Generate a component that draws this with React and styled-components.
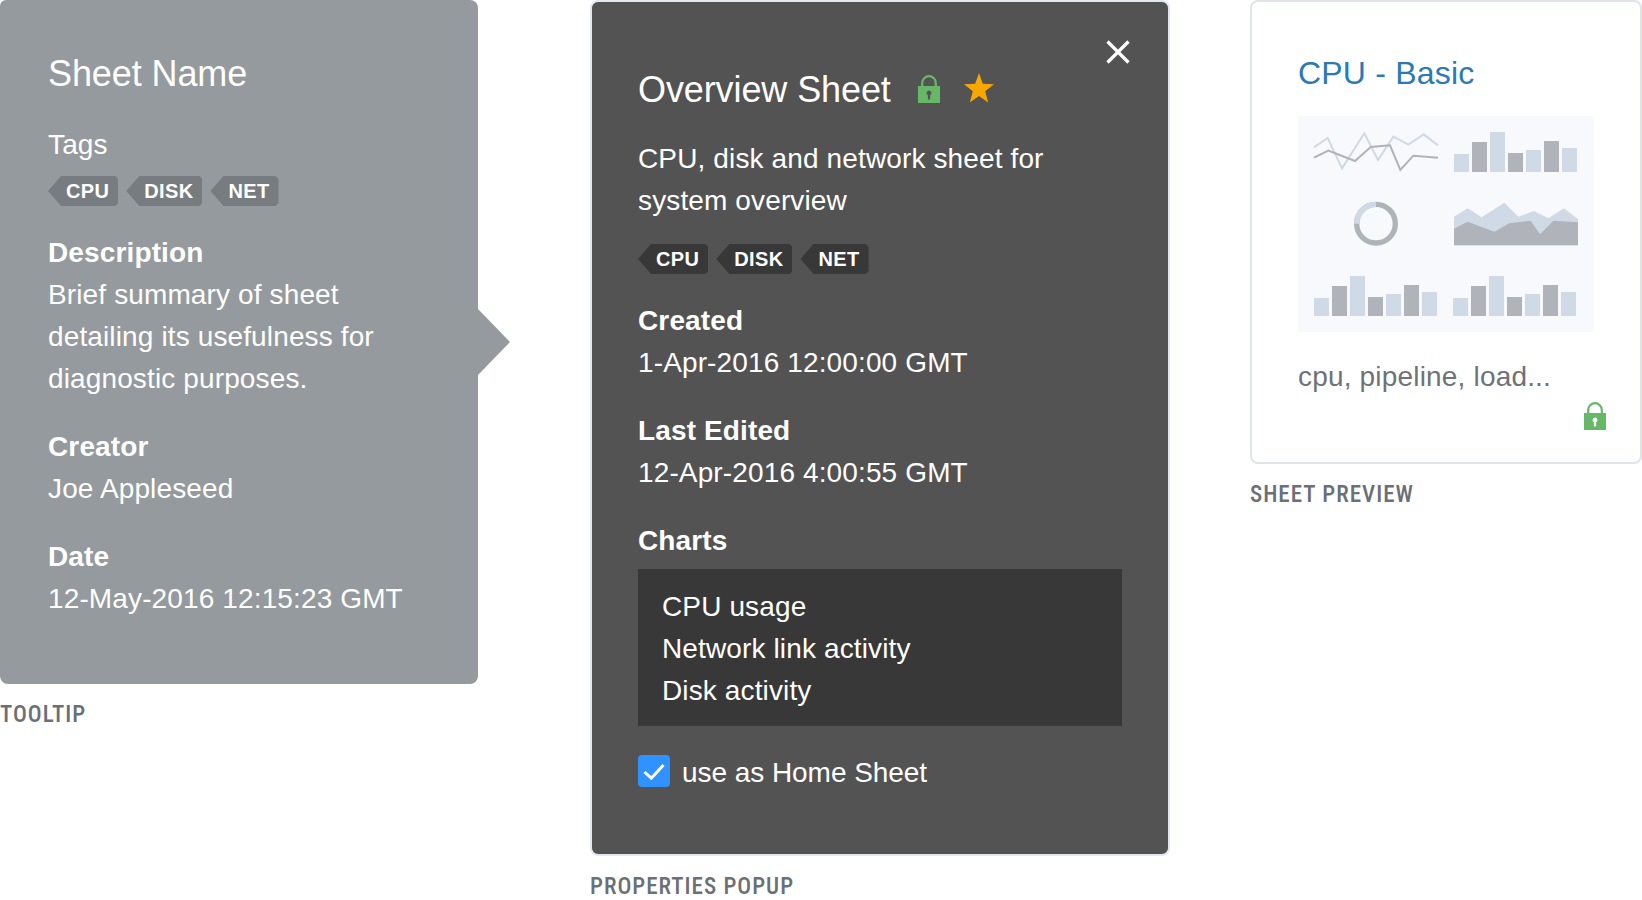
import React from 'react';
import styled, { createGlobalStyle } from 'styled-components';

const Global = createGlobalStyle`
  html, body { margin: 0; padding: 0; background: #fff; }
  body { font-family: "Liberation Sans", Arial, sans-serif; font-size: 28px; line-height: 42px; letter-spacing: 0.13px; }
`;
const Page = styled.div`
  display: flex;
  align-items: flex-start;
  width: 1642px;
  height: 900px;
  overflow: hidden;
`;
const TooltipColumn = styled.section`width: 478px; flex: none;`;
const PopupColumn = styled.section`width: 580px; flex: none; margin-left: 112px;`;
const PreviewColumn = styled.section`width: 392px; flex: none; margin-left: 80px;`;

const Caption = styled.div`
  font-family: Roboto, sans-serif;
  font-weight: 500;
  font-size: 23px;
  line-height: 30px;
  color: #6b6f76;
  margin-top: ${p => p.$top}px;
  font-stretch: 75%;
  letter-spacing: 1px;
  white-space: nowrap;
`;

const Tooltip = styled.div`
  position: relative;
  height: 684px;
  box-sizing: border-box;
  padding: 53px 0 0 48px;
  background: #959a9e;
  border-radius: 6px 8px 8px 8px;
  color: #fff;
  &::after {
    content: '';
    position: absolute;
    left: 100%;
    top: 309px;
    border-style: solid;
    border-width: 33px 0 33px 32px;
    border-color: transparent transparent transparent #959a9e;
  }
`;
const Title = styled.h2`
  margin: 0;
  font-size: 36px;
  line-height: 42px;
  font-weight: 400;
  letter-spacing: -0.1px;
  display: flex;
  align-items: center;
`;
const Label = styled.div`
  font-weight: ${p => (p.$plain ? 400 : 700)};
  margin-top: ${p => p.$top}px;
`;
const Value = styled.div``;
const TagRow = styled.div`
  display: flex;
  gap: 8px;
  margin-top: ${p => p.$top}px;
`;
const Tag = styled.span`
  height: 30px;
  padding: 0 9px 0 18px;
  font-size: 20px;
  font-weight: 700;
  line-height: 31px;
  letter-spacing: 0.35px;
  color: #fff;
  background: ${p => p.$bg};
  clip-path: polygon(13px 0, calc(100% - 3px) 0, 100% 3px, 100% calc(100% - 3px), calc(100% - 3px) 100%, 13px 100%, 0 50%);
`;

const Popup = styled.div`
  position: relative;
  height: 856px;
  box-sizing: border-box;
  padding: 67px 46px 0;
  background: #535353;
  border: 2px solid #e3e7ef;
  border-radius: 8px;
  color: #fff;
`;
const Close = styled.svg`
  position: absolute;
  top: 38px;
  right: 38px;
  width: 24px;
  height: 24px;
`;
const TitleLock = styled.svg`
  width: 22px;
  height: 28px;
  margin: -3px 0 0 27px;
  flex: none;
`;
const Star = styled.svg`
  width: 30px;
  height: 30px;
  margin-left: 24px;
  margin-top: -5px;
  flex: none;
`;
const Summary = styled.p`margin: 27px 0 0;`;
const ChartList = styled.ul`
  list-style: none;
  margin: 7px 0 0;
  padding: 17px 24px 14px;
  background: #383838;
`;
const CheckRow = styled.label`
  display: flex;
  align-items: center;
  gap: 12px;
  height: 32px;
  margin-top: 29px;
`;
const CheckBox = styled.span`
  width: 32px;
  height: 32px;
  flex: none;
  display: flex;
  align-items: center;
  justify-content: center;
  background: #2f92ff;
  border-radius: 4px;
`;
const CheckText = styled.span`
  margin-top: 3px;
  letter-spacing: -0.05px;
`;

const Card = styled.div`
  height: 464px;
  box-sizing: border-box;
  display: flex;
  flex-direction: column;
  padding: 50px 46px 0;
  background: #fff;
  border: 2px solid #dfe4e9;
  border-radius: 8px;
`;
const CardTitle = styled.h3`
  margin: 0;
  font-size: 32px;
  line-height: 42px;
  font-weight: 400;
  letter-spacing: 0.2px;
  color: #2a7ab5;
`;
const Art = styled.svg`
  display: block;
  width: 296px;
  height: 216px;
  margin-top: 22px;
  flex: none;
`;
const CardText = styled.div`
  margin-top: 24px;
  letter-spacing: 0.18px;
  color: #6f7277;
`;
const CardLock = styled.svg`
  width: 22px;
  height: 28px;
  align-self: flex-end;
  margin: 4px -12px 0 0;
`;

const LockIcon = ({ as: Comp }) => (
  <Comp viewBox="0 0 22 28">
    <path d="M4.200 12V8a6.800 6.800 0 0 1 13.600 0V12" fill="none" stroke="#66b866" strokeWidth="2.2" />
    <path
      fillRule="evenodd"
      fill="#66b866"
      d="M0 11h22v17H0z M11 15.500a2.500 2.500 0 0 0-1.100 4.700v4.300h2.200v-4.300a2.500 2.500 0 0 0-1.100-4.700z"
    />
  </Comp>
);

const light = '#d0dae6';
const dark = '#b0b3ba';
const Bars = ({ x, y, base }) => {
  const tops = [114, 78, 48, 111, 102, 75, 96];
  return tops.map((t, i) => (
    <rect key={i} x={x + i * 54} y={t + y} width="45" height={base - t} fill={i % 2 ? dark : light} />
  ));
};

const SheetArt = () => (
  <Art viewBox="174 348 888 648">
    <rect x="174" y="348" width="888" height="648" fill="#f7f9fc" />
    <polyline points="222,442 263,414 306,505 373,400 414,480 460,410 505,434 551,403 594,436" fill="none" stroke={light} strokeWidth="6" />
    <polyline points="222,473 265,452 345,483 392,441 450,436 481,510 520,467 594,473" fill="none" stroke={dark} strokeWidth="6" />
    {[[642, 462], [696, 426], [750, 396], [804, 459], [858, 450], [912, 423], [966, 444]].map(([x, t], i) => (
      <rect key={x} x={x} y={t} width="45" height={516 - t} fill={i % 2 ? dark : light} />
    ))}
    <circle cx="408" cy="671" r="58" fill="none" stroke={dark} strokeWidth="16" />
    <path d="M350 671A58 58 0 0 1 408 613" fill="none" stroke={light} strokeWidth="16" />
    <polygon points="642,650 683,625 725,652 793,608 835,650 882,633 925,655 972,625 1014,657 1014,736 642,736" fill={light} />
    <polygon points="642,686 683,665 763,695 808,670 872,662 900,703 940,662 1014,667 1014,736 642,736" fill={dark} />
    <Bars x={222} y={780} base={168} />
    <Bars x={639} y={780} base={168} />
  </Art>
);

const tags = ['CPU', 'DISK', 'NET'];

export default function App() {
  return (
    <Page>
      <Global />
      <TooltipColumn>
        <Tooltip>
          <Title>Sheet Name</Title>
          <Label $plain $top={29}>Tags</Label>
          <TagRow $top={10}>
            {tags.map(t => <Tag key={t} $bg="#777c80">{t}</Tag>)}
          </TagRow>
          <Label $top={26}>Description</Label>
          <Value>Brief summary of sheet<br />detailing its usefulness for<br />diagnostic purposes.</Value>
          <Label $top={26}>Creator</Label>
          <Value>Joe Appleseed</Value>
          <Label $top={26}>Date</Label>
          <Value>12-May-2016 12:15:23 GMT</Value>
        </Tooltip>
        <Caption $top={16}>TOOLTIP</Caption>
      </TooltipColumn>

      <PopupColumn>
        <Popup>
          <Close viewBox="0 0 24 24">
            <path d="M1.500 1.500l21 21M22.500 1.500l-21 21" stroke="#fff" strokeWidth="3.200" fill="none" />
          </Close>
          <Title>
            Overview Sheet
            <LockIcon as={TitleLock} />
            <Star viewBox="0 0 30 30">
              <polygon fill="#f7a800" points="15,0 18.800,10.700 30,11.300 21.200,18.300 24.200,29.500 15,23.100 5.800,29.500 8.800,18.300 0,11.300 11.200,10.700" />
            </Star>
          </Title>
          <Summary>CPU, disk and network sheet for<br />system overview</Summary>
          <TagRow $top={22}>
            {tags.map(t => <Tag key={t} $bg="#383838">{t}</Tag>)}
          </TagRow>
          <Label $top={26}>Created</Label>
          <Value>1-Apr-2016 12:00:00 GMT</Value>
          <Label $top={26}>Last Edited</Label>
          <Value>12-Apr-2016 4:00:55 GMT</Value>
          <Label $top={26}>Charts</Label>
          <ChartList>
            <li>CPU usage</li>
            <li>Network link activity</li>
            <li>Disk activity</li>
          </ChartList>
          <CheckRow>
            <CheckBox>
              <svg width="22" height="18" viewBox="0 0 22 18">
                <path d="M1.500 10l6.800 6.200L20.500 3" fill="none" stroke="#fff" strokeWidth="3" />
              </svg>
            </CheckBox>
            <CheckText>use as Home Sheet</CheckText>
          </CheckRow>
        </Popup>
        <Caption $top={16}>PROPERTIES POPUP</Caption>
      </PopupColumn>

      <PreviewColumn>
        <Card>
          <CardTitle>CPU - Basic</CardTitle>
          <SheetArt />
          <CardText>cpu, pipeline, load...</CardText>
          <LockIcon as={CardLock} />
        </Card>
        <Caption $top={16}>SHEET PREVIEW</Caption>
      </PreviewColumn>
    </Page>
  );
}
